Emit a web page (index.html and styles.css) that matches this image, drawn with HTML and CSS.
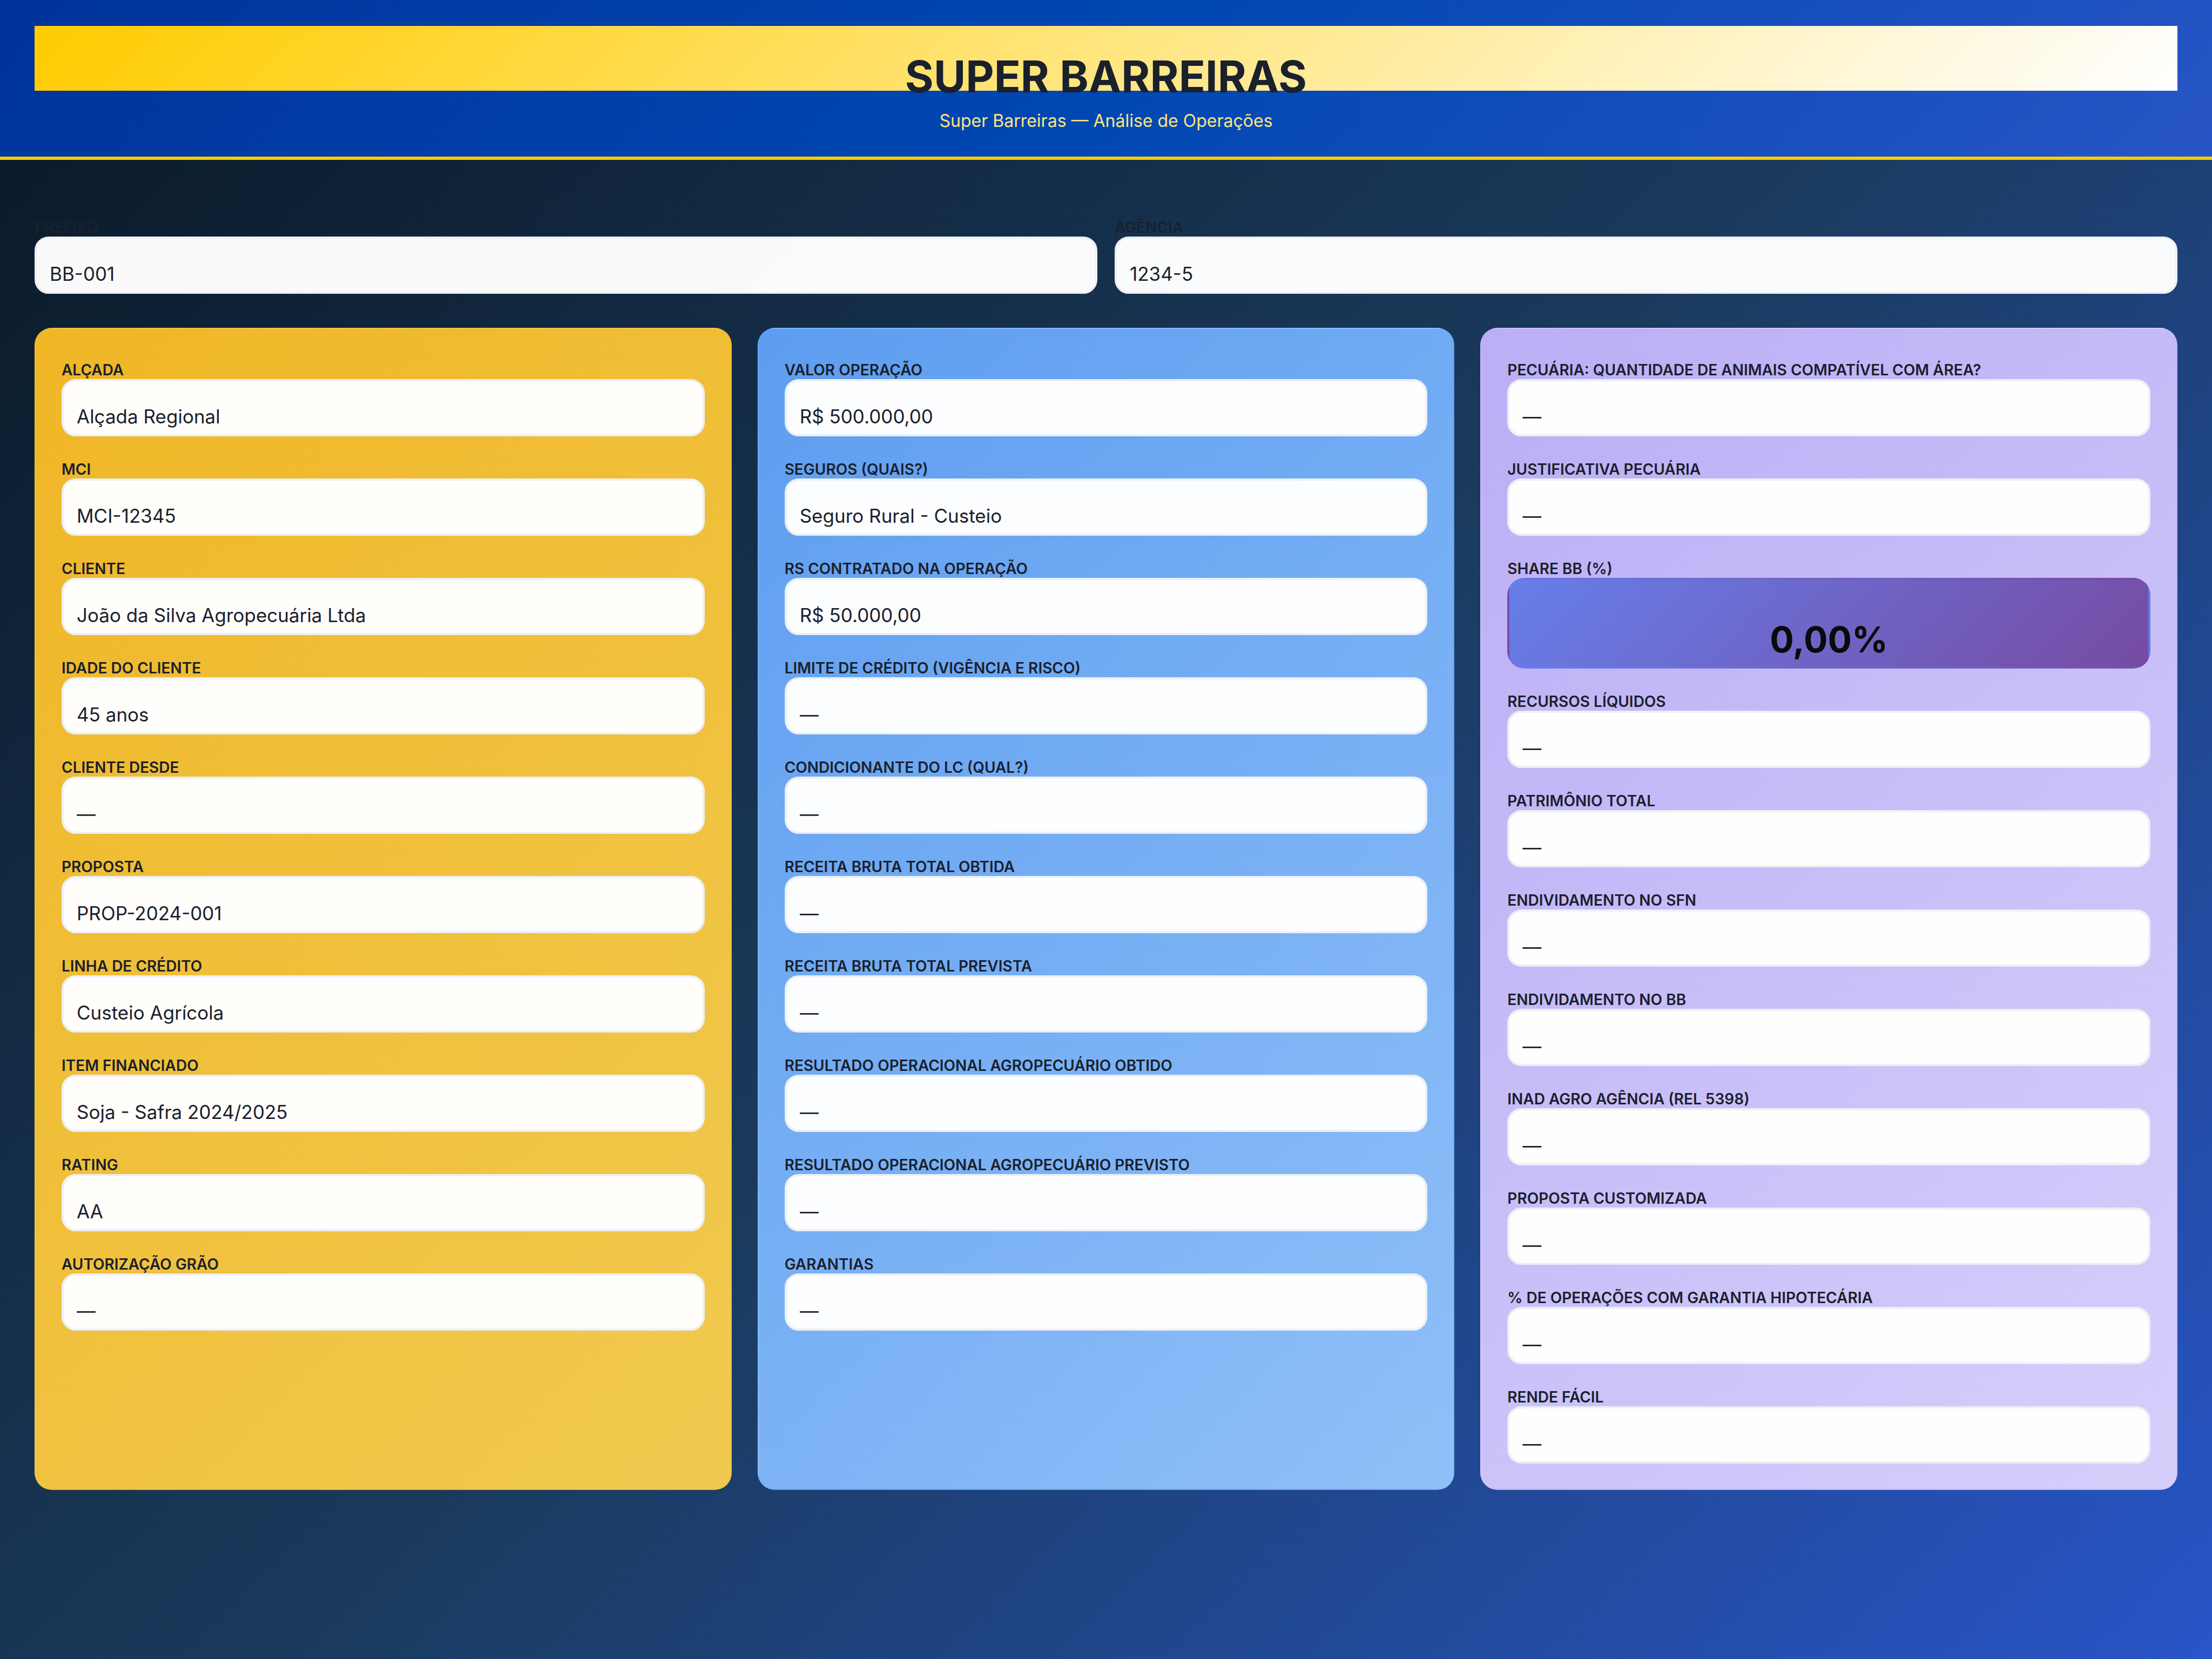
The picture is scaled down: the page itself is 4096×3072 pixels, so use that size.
FILE: index.html
```html
<!DOCTYPE html>
<html lang="pt-BR">
<head>
<meta charset="utf-8">
<meta name="viewport" content="width=device-width, initial-scale=1">
<title>Super Barreiras</title>
<link rel="stylesheet" href="styles.css">
</head>
<body>
<header class="header">
  <h1 class="title">SUPER BARREIRAS</h1>
  <p class="subtitle">Super Barreiras — Análise de Operações</p>
</header>
<main class="main">
  <section class="top">
    <div class="field"><label for="prefixo">PREFIXO</label><input id="prefixo" type="text" value="BB-001" readonly></div>
    <div class="field"><label for="agencia">AGÊNCIA</label><input id="agencia" type="text" value="1234-5" readonly></div>
  </section>
  <div class="columns">
    <section class="column yellow">
      <div class="field"><label for="a1">ALÇADA</label><input id="a1" type="text" value="Alçada Regional" readonly></div>
      <div class="field"><label for="a2">MCI</label><input id="a2" type="text" value="MCI-12345" readonly></div>
      <div class="field"><label for="a3">CLIENTE</label><input id="a3" type="text" value="João da Silva Agropecuária Ltda" readonly></div>
      <div class="field"><label for="a4">IDADE DO CLIENTE</label><input id="a4" type="text" value="45 anos" readonly></div>
      <div class="field"><label for="a5">CLIENTE DESDE</label><input id="a5" type="text" value="—" readonly></div>
      <div class="field"><label for="a6">PROPOSTA</label><input id="a6" type="text" value="PROP-2024-001" readonly></div>
      <div class="field"><label for="a7">LINHA DE CRÉDITO</label><input id="a7" type="text" value="Custeio Agrícola" readonly></div>
      <div class="field"><label for="a8">ITEM FINANCIADO</label><input id="a8" type="text" value="Soja - Safra 2024/2025" readonly></div>
      <div class="field"><label for="a9">RATING</label><input id="a9" type="text" value="AA" readonly></div>
      <div class="field"><label for="a10">AUTORIZAÇÃO GRÃO</label><input id="a10" type="text" value="—" readonly></div>
    </section>
    <section class="column blue">
      <div class="field"><label for="b1">VALOR OPERAÇÃO</label><input id="b1" type="text" value="R$ 500.000,00" readonly></div>
      <div class="field"><label for="b2">SEGUROS (QUAIS?)</label><input id="b2" type="text" value="Seguro Rural - Custeio" readonly></div>
      <div class="field"><label for="b3">RS CONTRATADO NA OPERAÇÃO</label><input id="b3" type="text" value="R$ 50.000,00" readonly></div>
      <div class="field"><label for="b4">LIMITE DE CRÉDITO (VIGÊNCIA E RISCO)</label><input id="b4" type="text" value="—" readonly></div>
      <div class="field"><label for="b5">CONDICIONANTE DO LC (QUAL?)</label><input id="b5" type="text" value="—" readonly></div>
      <div class="field"><label for="b6">RECEITA BRUTA TOTAL OBTIDA</label><input id="b6" type="text" value="—" readonly></div>
      <div class="field"><label for="b7">RECEITA BRUTA TOTAL PREVISTA</label><input id="b7" type="text" value="—" readonly></div>
      <div class="field"><label for="b8">RESULTADO OPERACIONAL AGROPECUÁRIO OBTIDO</label><input id="b8" type="text" value="—" readonly></div>
      <div class="field"><label for="b9">RESULTADO OPERACIONAL AGROPECUÁRIO PREVISTO</label><input id="b9" type="text" value="—" readonly></div>
      <div class="field"><label for="b10">GARANTIAS</label><input id="b10" type="text" value="—" readonly></div>
    </section>
    <section class="column purple">
      <div class="field"><label for="c1">PECUÁRIA: QUANTIDADE DE ANIMAIS COMPATÍVEL COM ÁREA?</label><input id="c1" type="text" value="—" readonly></div>
      <div class="field"><label for="c2">JUSTIFICATIVA PECUÁRIA</label><input id="c2" type="text" value="—" readonly></div>
      <div class="field"><label for="c3">SHARE BB (%)</label><input id="c3" class="share" type="text" value="0,00%" readonly></div>
      <div class="field"><label for="c4">RECURSOS LÍQUIDOS</label><input id="c4" type="text" value="—" readonly></div>
      <div class="field"><label for="c5">PATRIMÔNIO TOTAL</label><input id="c5" type="text" value="—" readonly></div>
      <div class="field"><label for="c6">ENDIVIDAMENTO NO SFN</label><input id="c6" type="text" value="—" readonly></div>
      <div class="field"><label for="c7">ENDIVIDAMENTO NO BB</label><input id="c7" type="text" value="—" readonly></div>
      <div class="field"><label for="c8">INAD AGRO AGÊNCIA (REL 5398)</label><input id="c8" type="text" value="—" readonly></div>
      <div class="field"><label for="c9">PROPOSTA CUSTOMIZADA</label><input id="c9" type="text" value="—" readonly></div>
      <div class="field"><label for="c10">% DE OPERAÇÕES COM GARANTIA HIPOTECÁRIA</label><input id="c10" type="text" value="—" readonly></div>
      <div class="field"><label for="c11">RENDE FÁCIL</label><input id="c11" type="text" value="—" readonly></div>
    </section>
  </div>
</main>
</body>
</html>
```
FILE: styles.css
```css
* {
  box-sizing: border-box;
}

body {
  margin: 0;
  min-height: 100vh;
  font-family: Inter, "Liberation Sans", sans-serif;
  color: #1a202c;
  background: linear-gradient(135deg, #0a1826 0%, #1a3a5c 50%, #2855c8 100%);
}

.header {
  padding: 48px 64px 46px;
  border-bottom: 6px solid #ffcc00;
  background: linear-gradient(135deg, #003399 0%, #0047b3 50%, #2855c5 100%);
  text-align: center;
}

.title {
  margin: 0;
  height: 120px;
  padding-top: 68px;
  font-size: 81px;
  line-height: 52px;
  font-weight: 700;
  background: linear-gradient(135deg, #ffcc00 0%, #ffffff 100%);
}

.subtitle {
  margin: 36px 0 0;
  font-size: 32px;
  line-height: 40px;
  font-weight: 400;
  color: #ffe680;
}

.main {
  padding: 97px 64px 64px;
}

.top {
  display: grid;
  grid-template-columns: 1fr 1fr;
  gap: 32px;
  margin-bottom: 63px;
}

.columns {
  display: grid;
  grid-template-columns: repeat(3, 1fr);
  gap: 48px;
}

.column {
  display: flex;
  flex-direction: column;
  gap: 33px;
  padding: 48px 48px 47px;
  border: 2px solid transparent;
  border-radius: 32px;
}

.yellow {
  background-image: linear-gradient(135deg, #f0b626, #f0ca50);
}

.blue {
  background-image: linear-gradient(135deg, #5d9df0, #8fc0f8);
}

.purple {
  background-image: linear-gradient(135deg, #bbaef5, #d5cffb);
}

.field {
  display: flex;
  flex-direction: column;
}

.field label {
  padding-top: 11px;
  font-size: 28px;
  line-height: 34px;
  font-weight: 600;
}

.field input {
  width: 100%;
  height: 106px;
  padding: 44px 24px 12px;
  border: 4px solid #edf0f5;
  border-radius: 26px;
  background: rgba(255, 255, 255, 0.98);
  color: #1a202c;
  font-family: inherit;
  font-size: 35px;
  line-height: 42px;
}

.field .share {
  height: 168px;
  padding: 70px 24px 10px;
  border-color: transparent;
  border-radius: 32px;
  background: linear-gradient(135deg, #667eea, #764ba2);
  color: #0a0a0a;
  font-size: 66px;
  line-height: 80px;
  font-weight: 700;
  text-align: center;
}
```
